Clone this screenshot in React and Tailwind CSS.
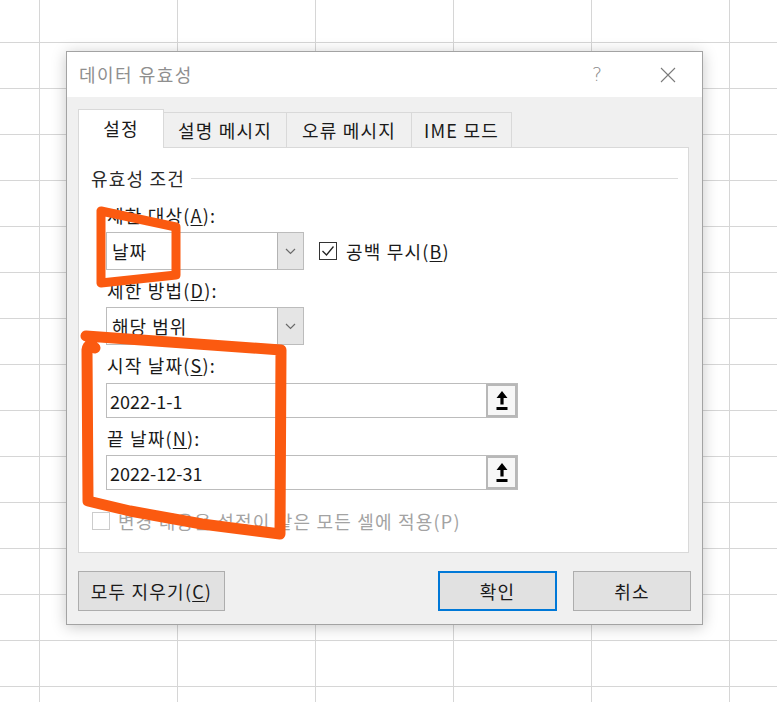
import React from "react";

const U = ({ children }) => <span className="underline underline-offset-2">{children}</span>;

function Chevron() {
  return (
    <svg width="11" height="7" viewBox="0 0 11 7" className="block">
      <path d="M1 1 L5.5 5.5 L10 1" fill="none" stroke="#6a6a6a" strokeWidth="1.2" />
    </svg>
  );
}

function Combo({ value }) {
  return (
    <div className="flex w-[198px] h-[38px] border border-[#bcbcbc] bg-white">
      <div className="flex-1 flex items-center pl-[5px] text-[18px] tracking-[1px] text-[#1a1a1a]">{value}</div>
      <div className="w-[26px] h-full bg-[#e5e5e5] border-l border-[#b3b3b3] flex items-center justify-center">
        <Chevron />
      </div>
    </div>
  );
}

function UploadIcon() {
  return (
    <svg width="12" height="20" viewBox="0 0 12 20" className="block">
      <polygon points="6,0 11.5,7 7.6,7 7.6,13.5 4.4,13.5 4.4,7 0.5,7" fill="#000" />
      <rect x="0.5" y="16" width="11" height="3" fill="#000" />
    </svg>
  );
}

function RefInput({ value }) {
  return (
    <div className="flex w-[412px] h-[35px] border border-[#bcbcbc] bg-white">
      <div className="flex-1 flex items-center pl-[3px] text-[18px] tracking-normal text-[#1a1a1a]">{value}</div>
      <div className="w-[31px] h-full border-2 border-[#b8b8b8] bg-[#f7f7f7] flex items-center justify-center">
        <UploadIcon />
      </div>
    </div>
  );
}

export default function App() {
  const cells = [];
  for (let r = 0; r < 16; r++) {
    for (let c = 0; c < 7; c++) {
      cells.push(<div key={r + "-" + c} className="border-r border-b border-[#d6d6d6]" />);
    }
  }

  return (
    <div className="relative w-[777px] h-[702px] overflow-hidden bg-white font-['Noto_Sans_CJK_KR','Noto_Sans',sans-serif]">
      {/* spreadsheet grid */}
      <div className="grid grid-cols-[40px_repeat(6,138px)] grid-rows-[43px_repeat(15,46px)] w-[868px]">
        {cells}
      </div>

      {/* dialog */}
      <div className="absolute left-[66px] top-[51px] w-[637px] h-[574px] border border-[#a3a3a3] bg-[#f0f0f0] shadow-[0_2px_14px_rgba(0,0,0,0.22)] flex flex-col">
        {/* title bar */}
        <div className="h-[45px] bg-white flex items-center pl-[12px] shrink-0">
          <div className="text-[18px] text-[#8f8f8f] tracking-[1.5px]">데이터 유효성</div>
          <div className="ml-auto w-[20px] text-center text-[19px] text-[#8a8a8a] font-['DejaVu_Sans',sans-serif] font-light mr-[53px]">?</div>
          <svg width="16" height="16" viewBox="0 0 16 16" className="mr-[26px]">
            <path d="M1 1 L15 15 M15 1 L1 15" stroke="#7a7a7a" strokeWidth="1.1" />
          </svg>
        </div>

        {/* body */}
        <div className="flex-1 px-[11px] pt-[12px] flex flex-col text-[18px] tracking-[1.2px]">
          {/* tabs */}
          <div className="flex items-end h-[39px] relative z-10 text-[#1a1a1a]">
            <div className="w-[86px] h-[39px] bg-white border border-[#d9d9d9] border-b-0 flex items-center justify-center pb-[2px]">설정</div>
            <div className="w-[123px] h-[36px] border-t border-r border-[#d9d9d9] flex items-center justify-center">설명 메시지</div>
            <div className="w-[125px] h-[36px] border-t border-r border-[#d9d9d9] flex items-center justify-center">오류 메시지</div>
            <div className="w-[100px] h-[36px] border-t border-r border-[#d9d9d9] flex items-center justify-center">IME 모드</div>
          </div>

          {/* panel */}
          <div className="w-[611px] h-[406px] -mt-px bg-white border border-[#d9d9d9] flex flex-col pl-[12px] pt-[19px] text-[#1a1a1a] leading-[22px]">
            <div className="flex items-center h-[22px]">
              <span className="text-[#2a2a2a]">유효성 조건</span>
              <div className="flex-1 h-px bg-[#dcdcdc] ml-[6px] mr-[10px]" />
            </div>

            <div className="pl-[16px] flex flex-col">
              <div className="mt-[15px] h-[22px]">제한 대상(<U>A</U>):</div>
              <div className="mt-[6px] flex items-center">
                <div className="-ml-px"><Combo value="날짜" /></div>
                <div className="ml-[15px] flex items-center">
                  <div className="w-[18px] h-[18px] border border-[#333] bg-white flex items-center justify-center">
                    <svg width="14" height="12" viewBox="0 0 14 12">
                      <path d="M1.5 6 L5.5 10 L12.5 1.5" fill="none" stroke="#222" strokeWidth="1.3" />
                    </svg>
                  </div>
                  <span className="ml-[9px]">공백 무시(<U>B</U>)</span>
                </div>
              </div>

              <div className="mt-[9px] h-[22px]">제한 방법(<U>D</U>):</div>
              <div className="mt-[6px] -ml-px"><Combo value="해당 범위" /></div>

              <div className="mt-[9px] h-[22px]">시작 날짜(<U>S</U>):</div>
              <div className="mt-[7px] -ml-px"><RefInput value="2022-1-1" /></div>

              <div className="mt-[9px] h-[22px]">끝 날짜(<U>N</U>):</div>
              <div className="mt-[6px] -ml-px"><RefInput value="2022-12-31" /></div>
            </div>

            <div className="mt-[20px] flex items-center h-[22px] pl-[1px]">
              <div className="w-[18px] h-[18px] border border-[#cccccc] bg-white" />
              <span className="ml-[8px] text-[#a3a3a3]">변경 내용을 설정이 같은 모든 셀에 적용(P)</span>
            </div>
          </div>

          {/* buttons */}
          <div className="mt-[18px] flex text-[#1a1a1a]">
            <div className="w-[147px] h-[40px] bg-[#e1e1e1] border border-[#adadad] flex items-center justify-center">모두 지우기(<U>C</U>)</div>
            <div className="ml-auto w-[119px] h-[40px] bg-[#e1e1e1] border-2 border-[#0078d7] flex items-center justify-center">확인</div>
            <div className="ml-[16px] w-[118px] h-[40px] bg-[#e1e1e1] border border-[#adadad] flex items-center justify-center">취소</div>
          </div>
        </div>
      </div>

      {/* orange hand-drawn annotations */}
      <svg className="absolute inset-0 pointer-events-none z-20" width="777" height="702" viewBox="0 0 777 702">
        <path d="M101 211 L176 227 L176 275 L101 283 L101 211" fill="none" stroke="#fb5a10" strokeWidth="9" strokeLinejoin="round" strokeLinecap="round" />
        <path d="M86 336 L281 350 L280 534 L202 524 L130 511 L88 501 L87 350 Q88 342 95 348" fill="none" stroke="#fb5a10" strokeWidth="11" strokeLinejoin="round" strokeLinecap="round" />
      </svg>
    </div>
  );
}
